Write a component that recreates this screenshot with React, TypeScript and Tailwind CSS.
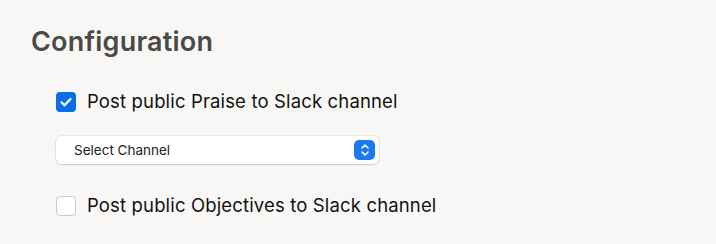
import { useState } from "react";

export default function App() {
  const [praise, setPraise] = useState(true);
  const [objectives, setObjectives] = useState(false);

  return (
    <main
      className="h-[244px] w-[716px] bg-[#f8f7f5] px-[31px] pt-[24px] text-[#111]"
      style={{ fontFamily: "Inter, 'Noto Sans', sans-serif" }}
    >
      <h2 className="text-[27px] font-semibold leading-[36px] tracking-[0.2px] text-[#4a4a48]">
        Configuration
      </h2>

      <div className="mt-[31px] pl-[25px]">
        <label className="flex h-[22px] items-center gap-[11px] text-[18.5px] tracking-[0.15px]">
          <button
            type="button"
            onClick={() => setPraise(!praise)}
            className={
              praise
                ? "flex h-[20px] w-[20px] items-center justify-center rounded-[4px] bg-[#0b6fe3]"
                : "h-[20px] w-[20px] rounded-[4px] border border-[#c9c9c9] bg-white"
            }
          >
            {praise && (
              <svg width="14" height="14" viewBox="0 0 14 14" fill="none">
                <path
                  d="M2.5 7.3l3 3 6-6.3"
                  stroke="white"
                  strokeWidth="2.2"
                  strokeLinecap="round"
                  strokeLinejoin="round"
                />
              </svg>
            )}
          </button>
          Post public Praise to Slack channel
        </label>

        <div className="mt-[23px] flex h-[28px] w-[323px] items-center justify-between rounded-[6px] bg-white pl-[18px] pr-[4px] shadow-[0_0_0_1px_rgba(0,0,0,0.06),0_1px_2px_rgba(0,0,0,0.12)]">
          <span className="text-[13.5px] text-[#222]">Select Channel</span>
          <span className="flex h-[20px] w-[21px] items-center justify-center rounded-[5px] bg-[#1a7bf0]">
            <svg width="10" height="14" viewBox="0 0 10 14" fill="none">
              <path
                d="M2 5l3-3 3 3M2 9l3 3 3-3"
                stroke="white"
                strokeWidth="1.6"
                strokeLinecap="round"
                strokeLinejoin="round"
              />
            </svg>
          </span>
        </div>

        <label className="mt-[31px] flex h-[22px] items-center gap-[11px] text-[18.5px] tracking-[0.15px]">
          <button
            type="button"
            onClick={() => setObjectives(!objectives)}
            className={
              objectives
                ? "flex h-[20px] w-[20px] items-center justify-center rounded-[4px] bg-[#0b6fe3]"
                : "h-[20px] w-[20px] rounded-[4px] border border-[#c9c9c9] bg-white"
            }
          >
            {objectives && (
              <svg width="14" height="14" viewBox="0 0 14 14" fill="none">
                <path
                  d="M2.5 7.3l3 3 6-6.3"
                  stroke="white"
                  strokeWidth="2.2"
                  strokeLinecap="round"
                  strokeLinejoin="round"
                />
              </svg>
            )}
          </button>
          Post public Objectives to Slack channel
        </label>
      </div>
    </main>
  );
}
